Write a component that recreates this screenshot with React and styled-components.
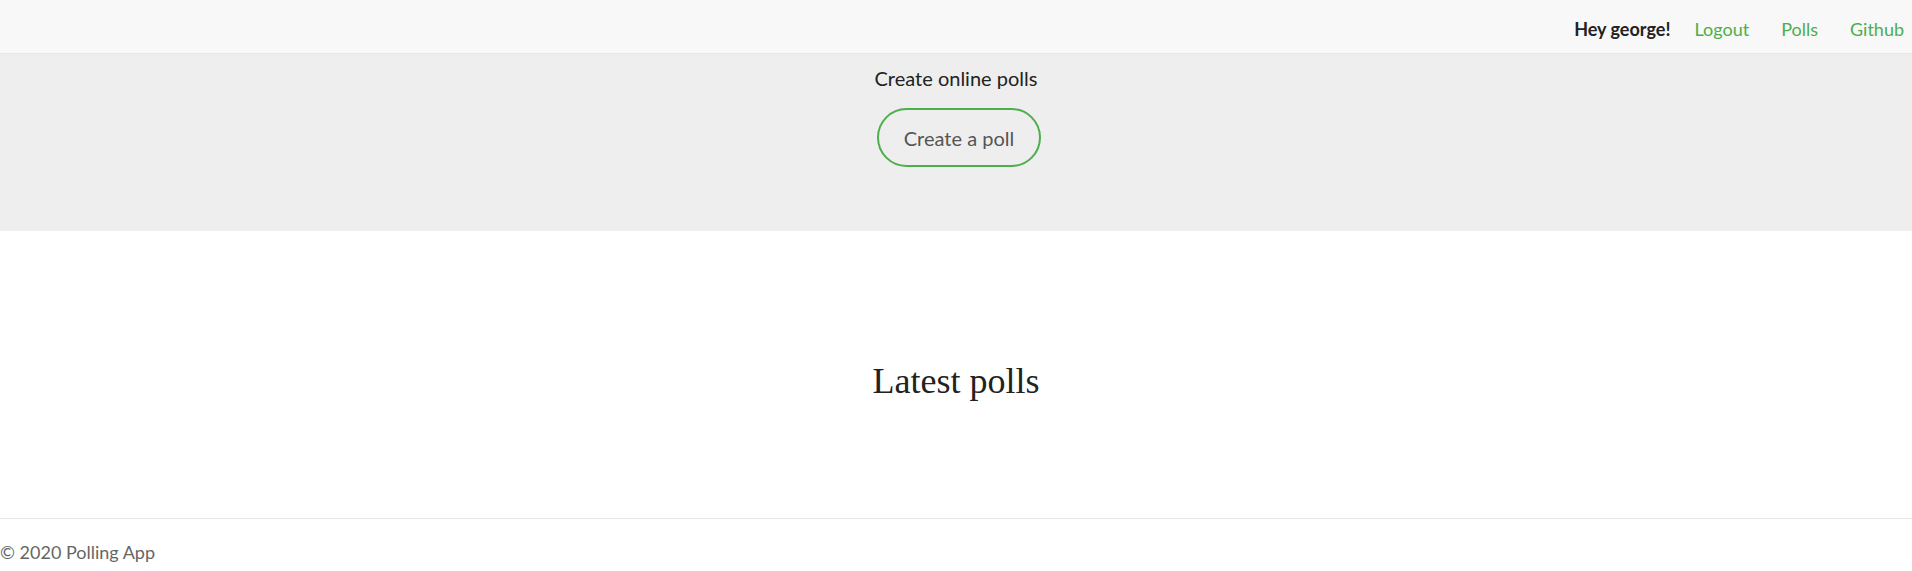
import React from 'react';
import styled, { createGlobalStyle } from 'styled-components';

const GlobalStyle = createGlobalStyle`
  body {
    margin: 0;
    background: #ffffff;
    font-family: Lato, "Open Sans", sans-serif;
    color: #333333;
  }
`;

const green = '#4cae4c';

const NavBar = styled.nav`
  display: flex;
  justify-content: flex-end;
  align-items: center;
  height: 53px;
  background: #f8f8f8;
  border-bottom: 1px solid #e7e7e7;
`;

const NavList = styled.ul`
  display: flex;
  align-items: center;
  list-style: none;
  margin: 0;
  padding: 4px 0 0;
  font-size: 18px;
`;

const Greeting = styled.li`
  font-weight: 700;
  color: #222222;
  padding-right: 8px;
`;

const NavLink = styled.a`
  display: block;
  padding: 0 16px;
  color: ${green};
  text-decoration: none;
  cursor: pointer;

  li:last-child > & {
    padding-right: 8px;
  }
`;

const Hero = styled.section`
  display: flex;
  flex-direction: column;
  align-items: center;
  background: #eeeeee;
  padding: 10px 0 64px;
`;

const Tagline = styled.p`
  margin: 0 0 16px;
  font-size: 20px;
  line-height: 28px;
  color: #222222;
`;

const PillButton = styled.button`
  height: 59px;
  padding: 0 25px;
  border: 2px solid ${green};
  border-radius: 30px;
  background: transparent;
  font-family: inherit;
  font-size: 20px;
  color: #555555;
  cursor: pointer;
  transform: translateX(3px);
`;

const Main = styled.main`
  display: flex;
  justify-content: center;
  padding: 130px 0 117px;
`;

const Heading = styled.h1`
  margin: 0;
  font-family: "Liberation Serif", "Times New Roman", serif;
  font-weight: 400;
  font-size: 36px;
  line-height: 40px;
  color: #222222;
`;

const Footer = styled.footer`
  border-top: 1px solid #e5e5e5;
  padding: 22px 0 10px;
  font-size: 18px;
  color: #666666;
`;

export default function App() {
  return (
    <>
      <GlobalStyle />
      <NavBar>
        <NavList>
          <Greeting>Hey george!</Greeting>
          <li><NavLink>Logout</NavLink></li>
          <li><NavLink>Polls</NavLink></li>
          <li><NavLink>Github</NavLink></li>
        </NavList>
      </NavBar>
      <Hero>
        <Tagline>Create online polls</Tagline>
        <PillButton>Create a poll</PillButton>
      </Hero>
      <Main>
        <Heading>Latest polls</Heading>
      </Main>
      <Footer>© 2020 Polling App</Footer>
    </>
  );
}
